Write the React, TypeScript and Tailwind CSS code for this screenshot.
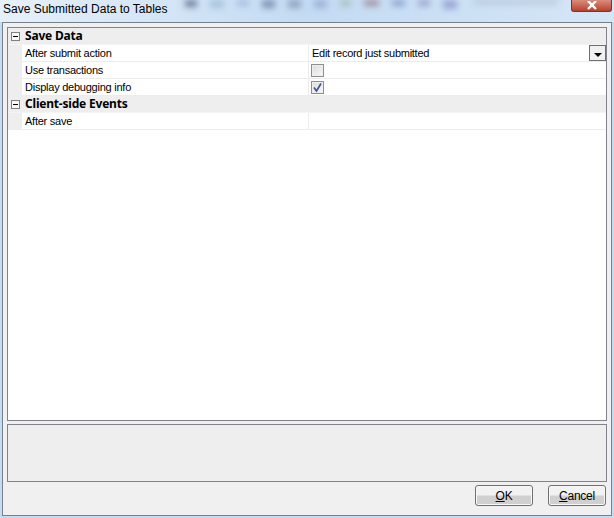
import React from "react";

const font = { fontFamily: '"Liberation Sans", Arial, sans-serif' };
const heading = { fontFamily: '"Noto Sans", "Liberation Sans", sans-serif' };

function Minus() {
  return (
    <div className="w-[9px] h-[9px] border border-[#808080] bg-[#f8f8f8] flex items-center justify-center shrink-0">
      <div className="w-[5px] h-px bg-black" />
    </div>
  );
}

function Group({ title }: { title: string }) {
  return (
    <div style={heading} className="h-[17px] flex items-center bg-[#eeeeee] pl-[3px] border-b border-[#f4f4f4]">
      <Minus />
      <span className="ml-[5px] text-[12px] font-bold text-black leading-none tracking-[-0.2px]">{title}</span>
    </div>
  );
}

function Row({ label, children }: { label: string; children?: React.ReactNode }) {
  return (
    <div className="flex h-[17px] bg-[#eeeeee] pl-[14px]">
      <div className="flex flex-1 bg-white border-b border-[#ececec]">
        <div className="w-[287px] pl-[3px] border-r border-[#ececec] flex items-center text-[11px] text-black leading-none tracking-[-0.24px]">{label}</div>
        <div className="flex-1 relative flex items-center pl-[3px] text-[11px] text-black leading-none tracking-[-0.27px]">{children}</div>
      </div>
    </div>
  );
}

function Check({ checked }: { checked?: boolean }) {
  return (
    <div className="w-[13px] h-[13px] -ml-px border border-[#8e8f8f] bg-gradient-to-br from-[#dcdcdc] to-[#f8f8f8] shadow-[inset_0_0_0_1px_#eeeeee] flex items-center justify-center">
      {checked && (
        <svg width="11" height="11" viewBox="0 0 11 11">
          <path d="M2 5.5 L4.5 9 L9 1.5" fill="none" stroke="#3f5599" strokeWidth="1.7" />
        </svg>
      )}
    </div>
  );
}

function Btn({ label, u, rest }: { label: string; u: string; rest: string }) {
  return (
    <button aria-label={label} className="w-[58px] h-[21px] rounded-[3px] border border-[#707070] bg-gradient-to-b from-[#f2f2f2] from-45% to-[#d0d0d0] to-55% text-[12px] text-black leading-none tracking-[-0.25px] shadow-[inset_0_0_0_1px_#f8f8f8]">
      <span className="underline">{u}</span>{rest}
    </button>
  );
}

function Blobs() {
  return (
    <div className="absolute inset-0 flex items-start pl-[185px] gap-[13px] blur-[3px] pointer-events-none">
      <div className="w-[12px] h-[7px] shrink-0 bg-[#6d7d9c]" />
      <div className="w-[14px] h-[8px] shrink-0 bg-[#a9c2dc]" />
      <div className="w-[12px] h-[6px] shrink-0 bg-[#a5bce0]" />
      <div className="w-[13px] h-[8px] shrink-0 bg-[#7d93b6]" />
      <div className="w-[13px] h-[8px] shrink-0 bg-[#8ea3c0]" />
      <div className="w-[13px] h-[8px] shrink-0 bg-[#9db2d6]" />
      <div className="w-[11px] h-[6px] shrink-0 bg-[#a3c2bb]" />
      <div className="w-[15px] h-[6px] shrink-0 bg-[#a08ca0]" />
      <div className="w-[13px] h-[6px] shrink-0 bg-[#8c9fd0]" />
      <div className="w-[12px] h-[6px] shrink-0 bg-[#9a9fd0]" />
      <div className="w-[14px] h-[9px] shrink-0 bg-[#9aa5d4]" />
      <div className="w-[84px] h-[4px] ml-[4px] shrink-0 bg-[#b3c3d6]" />
    </div>
  );
}

export default function App() {
  return (
    <div style={font} className="w-[614px] h-[518px] overflow-hidden flex flex-col bg-[#c4dcf2]">
      <div className="relative h-[22px] shrink-0 flex items-start justify-between bg-gradient-to-r from-[#e6f0f9] via-[#c3dbf3] to-[#d5e6f6]">
        <Blobs />
        <span className="relative text-[12px] ml-[3px] mt-[2px] text-black leading-[15px]">Save Submitted Data to Tables</span>
        <div className="relative w-[41px] h-[12px] mr-[2px] rounded-b-[3px] border border-t-0 border-[#6b3a32] bg-gradient-to-b from-[#d98c7c] to-[#b8402a] flex items-center justify-center">
          <svg width="12" height="10" viewBox="0 0 12 10"><path d="M2 0 L10 8 M10 0 L2 8" stroke="#fff" strokeWidth="2.4" fill="none" /></svg>
        </div>
      </div>
      <div className="flex-1 mx-[2px] mb-[2px] border border-[#76818d] bg-[#f0f0f0] flex flex-col px-[4px] pt-[4px] pb-[4px]">
        <div className="h-[394px] border border-[#82828c] bg-white">
          <Group title="Save Data" />
          <Row label="After submit action">
            <span>Edit record just submitted</span>
            <div className="absolute right-0 top-0 w-[17px] h-[16px] border border-[#6f6f6f] bg-[#f0f0f0] flex items-end justify-center pb-[3px]">
              <div className="w-0 h-0 border-l-[4px] border-r-[4px] border-t-[4px] border-l-transparent border-r-transparent border-t-black" />
            </div>
          </Row>
          <Row label="Use transactions"><Check /></Row>
          <Row label="Display debugging info"><Check checked /></Row>
          <Group title="Client-side Events" />
          <Row label="After save" />
        </div>
        <div className="h-[58px] mt-[3px] border border-[#82828c] bg-[#eeeeee]" />
        <div className="flex justify-end gap-[15px] mt-[3px] pr-px">
          <Btn label="OK" u="O" rest="K" />
          <Btn label="Cancel" u="C" rest="ancel" />
        </div>
      </div>
    </div>
  );
}
